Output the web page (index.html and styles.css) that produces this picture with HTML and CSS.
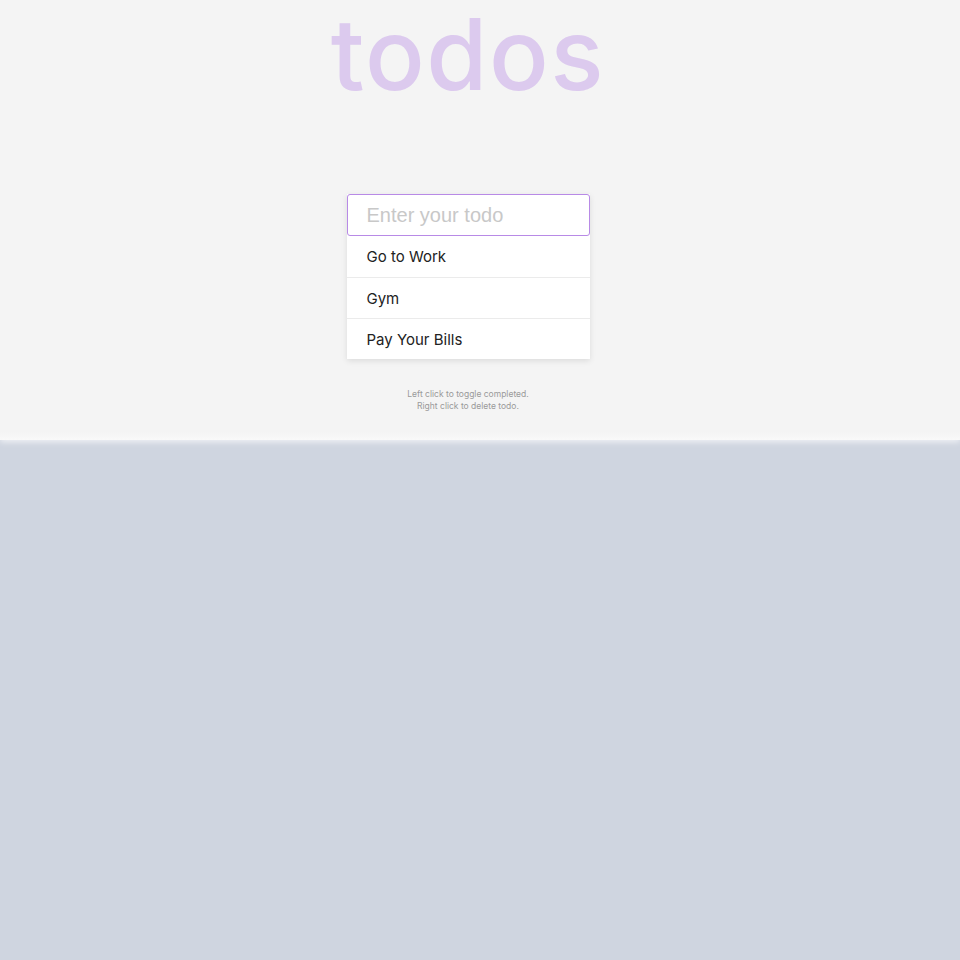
FILE: index.html
```html
<!DOCTYPE html>
<html lang="en">
<head>
<meta charset="utf-8">
<title>todos</title>
<link rel="stylesheet" href="styles.css">
</head>
<body>
<main class="app">
  <h1 class="title">todos</h1>
  <form class="todo-form">
    <input class="todo-input" type="text" placeholder="Enter your todo" autofocus>
    <ul class="todo-list">
      <li class="todo-item">Go to Work</li>
      <li class="todo-item">Gym</li>
      <li class="todo-item">Pay Your Bills</li>
    </ul>
  </form>
  <p class="hint">Left click to toggle completed.<br>Right click to delete todo.</p>
</main>
</body>
</html>
```

FILE: styles.css
```css
html {
  background: #cfd5e0;
  margin: 0;
  padding: 0;
}

body {
  margin: 0;
  height: 440px;
  background: linear-gradient(to bottom, #f4f4f4 0, #f4f4f4 432px, #f9f9f9 440px);
  box-shadow: 0 2px 6px rgba(255, 255, 255, 0.7);
  font-family: Inter, "Noto Sans", sans-serif;
}

.app {
  display: flex;
  flex-direction: column;
  align-items: center;
  padding-right: 24px;
}

.title {
  margin: 6px 0 0;
  font-family: Inter, "Noto Sans", sans-serif;
  font-size: 99px;
  font-weight: 500;
  line-height: 96px;
  letter-spacing: 1.5px;
  color: #dccaee;
}

.todo-form {
  margin-top: 92px;
  width: 243px;
  box-shadow: 0 2px 6px rgba(0, 0, 0, 0.1);
  background: #fff;
}

.todo-input {
  display: block;
  box-sizing: border-box;
  width: 243px;
  height: 42px;
  margin: 0;
  padding: 0 19px;
  border: 1px solid #b88ae6;
  border-radius: 3px;
  outline: none;
  font-family: "Liberation Sans", Arial, sans-serif;
  font-size: 20px;
  color: #333;
  background: #fff;
  caret-color: #555;
}

.todo-input::placeholder {
  color: #c8c8c8;
}

.todo-list {
  list-style: none;
  margin: 0;
  padding: 0;
}

.todo-item {
  height: 40px;
  display: flex;
  align-items: center;
  padding-left: 20px;
  border-top: 1px solid #ebebeb;
  font-size: 15px;
  color: #222;
}

.todo-list .todo-item:first-child {
  border-top: none;
  height: 41px;
}

.hint {
  margin: 29px 0 0;
  text-align: center;
  font-size: 8.5px;
  line-height: 12px;
  color: #9a9a9a;
}
```
